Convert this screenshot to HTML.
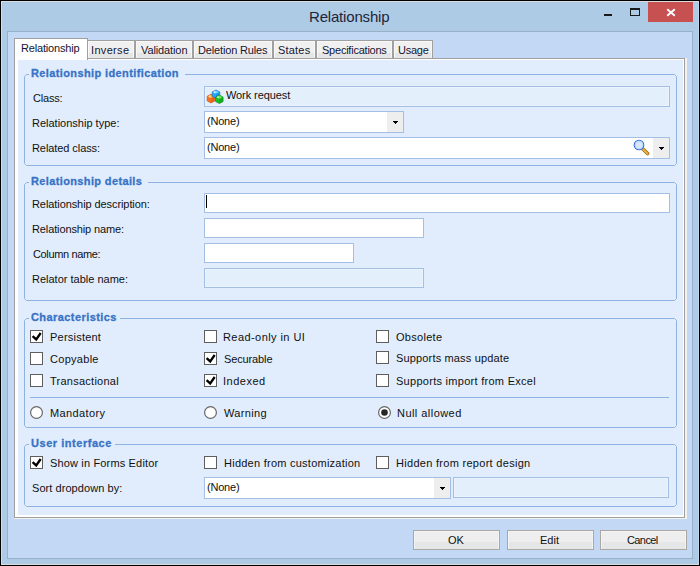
<!DOCTYPE html>
<html><head><meta charset="utf-8"><style>
html,body{margin:0;padding:0;width:700px;height:566px;overflow:hidden;background:#aecbe6}
div,svg{position:absolute}
.t{white-space:nowrap}
</style></head><body>
<div style="left:0px;top:0px;width:700px;height:566px;background:#000"></div>
<div style="left:1px;top:1px;width:698px;height:564px;background:#dcdcdc"></div>
<div style="left:2px;top:2px;width:697px;height:562px;background:#aecbe6"></div>
<div style="left:698px;top:2px;width:1px;height:562px;background:#bcd6ef"></div>
<div class="t" style="left:309px;top:10px;font:normal 15px/13px 'Liberation Sans',sans-serif;color:#1e2536;letter-spacing:-0.182px;">Relationship</div>
<div style="left:604px;top:14px;width:8px;height:2px;background:#1a1a1a"></div>
<div style="left:630px;top:8px;width:10px;height:8px;box-sizing:border-box;border:1px solid #1a1a1a;border-top-width:2px"></div>
<div style="left:648px;top:2px;width:45px;height:20px;background:#c75050"></div>
<svg style="position:absolute;left:648px;top:2px" width="45" height="20"><path d="M19.2 7.2 L26.8 13.8 M26.8 7.2 L19.2 13.8" stroke="#fff" stroke-width="1.9" stroke-linecap="butt"/></svg>
<div style="left:7px;top:31px;width:686px;height:528px;background:#98b0c8"></div>
<div style="left:8px;top:32px;width:684px;height:526px;background:#c3d8f5"></div>
<div style="left:14px;top:58px;width:671px;height:460px;background:#a0a0a0"></div>
<div style="left:685px;top:58px;width:2px;height:461px;background:#f4f2f0"></div>
<div style="left:14px;top:518px;width:673px;height:1px;background:#f4f2f0"></div>
<div style="left:15px;top:59px;width:669px;height:458px;background:#fff"></div>
<div style="left:18px;top:60px;width:665px;height:455px;background:#e1edfc"></div>
<div style="left:87px;top:40px;width:48px;height:19px;background:#a0a0a0"></div>
<div style="left:88px;top:41px;width:46px;height:17px;background:#f8f8f8"></div>
<div style="left:89px;top:42px;width:44px;height:11px;background:#f0f0f0"></div>
<div style="left:89px;top:53px;width:44px;height:4px;background:#e5e5e5"></div>
<div style="left:88px;top:57px;width:46px;height:1px;background:#e9e9e9"></div>
<div style="left:135px;top:40px;width:58px;height:19px;background:#a0a0a0"></div>
<div style="left:136px;top:41px;width:56px;height:17px;background:#f8f8f8"></div>
<div style="left:137px;top:42px;width:54px;height:11px;background:#f0f0f0"></div>
<div style="left:137px;top:53px;width:54px;height:4px;background:#e5e5e5"></div>
<div style="left:136px;top:57px;width:56px;height:1px;background:#e9e9e9"></div>
<div style="left:193px;top:40px;width:80px;height:19px;background:#a0a0a0"></div>
<div style="left:194px;top:41px;width:78px;height:17px;background:#f8f8f8"></div>
<div style="left:195px;top:42px;width:76px;height:11px;background:#f0f0f0"></div>
<div style="left:195px;top:53px;width:76px;height:4px;background:#e5e5e5"></div>
<div style="left:194px;top:57px;width:78px;height:1px;background:#e9e9e9"></div>
<div style="left:273px;top:40px;width:43px;height:19px;background:#a0a0a0"></div>
<div style="left:274px;top:41px;width:41px;height:17px;background:#f8f8f8"></div>
<div style="left:275px;top:42px;width:39px;height:11px;background:#f0f0f0"></div>
<div style="left:275px;top:53px;width:39px;height:4px;background:#e5e5e5"></div>
<div style="left:274px;top:57px;width:41px;height:1px;background:#e9e9e9"></div>
<div style="left:316px;top:40px;width:77px;height:19px;background:#a0a0a0"></div>
<div style="left:317px;top:41px;width:75px;height:17px;background:#f8f8f8"></div>
<div style="left:318px;top:42px;width:73px;height:11px;background:#f0f0f0"></div>
<div style="left:318px;top:53px;width:73px;height:4px;background:#e5e5e5"></div>
<div style="left:317px;top:57px;width:75px;height:1px;background:#e9e9e9"></div>
<div style="left:393px;top:40px;width:40px;height:19px;background:#a0a0a0"></div>
<div style="left:394px;top:41px;width:38px;height:17px;background:#f8f8f8"></div>
<div style="left:395px;top:42px;width:36px;height:11px;background:#f0f0f0"></div>
<div style="left:395px;top:53px;width:36px;height:4px;background:#e5e5e5"></div>
<div style="left:394px;top:57px;width:38px;height:1px;background:#e9e9e9"></div>
<div style="left:14px;top:38px;width:74px;height:22px;background:#a0a0a0"></div>
<div style="left:15px;top:39px;width:72px;height:21px;background:#fff"></div>
<div class="t" style="left:21px;top:42px;font:normal 11px/13px 'Liberation Sans',sans-serif;color:#141430;letter-spacing:-0.182px;">Relationship</div>
<div class="t" style="left:91px;top:44px;font:normal 11px/13px 'Liberation Sans',sans-serif;color:#141430;letter-spacing:0.333px;">Inverse</div>
<div class="t" style="left:141px;top:44px;font:normal 11px/13px 'Liberation Sans',sans-serif;color:#141430;letter-spacing:-0.111px;">Validation</div>
<div class="t" style="left:198px;top:44px;font:normal 11px/13px 'Liberation Sans',sans-serif;color:#141430;letter-spacing:-0.154px;">Deletion Rules</div>
<div class="t" style="left:278px;top:44px;font:normal 11px/13px 'Liberation Sans',sans-serif;color:#141430;letter-spacing:0.200px;">States</div>
<div class="t" style="left:322px;top:44px;font:normal 11px/13px 'Liberation Sans',sans-serif;color:#141430;letter-spacing:-0.231px;">Specifications</div>
<div class="t" style="left:398px;top:44px;font:normal 11px/13px 'Liberation Sans',sans-serif;color:#141430;letter-spacing:-0.250px;">Usage</div>
<svg style="position:absolute;left:24px;top:74px" width="653" height="92"><path d="M0.5 89 V2.5 L2.5 0.5 H5" fill="none" stroke="#8fb3e0" stroke-width="1"/><path d="M161 0.5 H650.5 L652.5 2.5 V89.5 L650.5 91.5 H2.5 L0.5 89.5 V89" fill="none" stroke="#8fb3e0" stroke-width="1"/></svg>
<div class="t" style="left:31px;top:67px;font:bold 11px/13px 'Liberation Sans',sans-serif;color:#3773c6;letter-spacing:0.385px;-webkit-text-stroke:0.3px #3773c6;">Relationship identification</div>
<svg style="position:absolute;left:24px;top:182px" width="653" height="119"><path d="M0.5 116 V2.5 L2.5 0.5 H5" fill="none" stroke="#8fb3e0" stroke-width="1"/><path d="M124 0.5 H650.5 L652.5 2.5 V116.5 L650.5 118.5 H2.5 L0.5 116.5 V116" fill="none" stroke="#8fb3e0" stroke-width="1"/></svg>
<div class="t" style="left:31px;top:175px;font:bold 11px/13px 'Liberation Sans',sans-serif;color:#3773c6;letter-spacing:0.368px;-webkit-text-stroke:0.3px #3773c6;">Relationship details</div>
<svg style="position:absolute;left:24px;top:318px" width="653" height="110"><path d="M0.5 107 V2.5 L2.5 0.5 H5" fill="none" stroke="#8fb3e0" stroke-width="1"/><path d="M96 0.5 H650.5 L652.5 2.5 V107.5 L650.5 109.5 H2.5 L0.5 107.5 V107" fill="none" stroke="#8fb3e0" stroke-width="1"/></svg>
<div class="t" style="left:31px;top:311px;font:bold 11px/13px 'Liberation Sans',sans-serif;color:#3773c6;letter-spacing:0.429px;-webkit-text-stroke:0.3px #3773c6;">Characteristics</div>
<svg style="position:absolute;left:24px;top:444px" width="653" height="63"><path d="M0.5 60 V2.5 L2.5 0.5 H5" fill="none" stroke="#8fb3e0" stroke-width="1"/><path d="M91 0.5 H650.5 L652.5 2.5 V60.5 L650.5 62.5 H2.5 L0.5 60.5 V60" fill="none" stroke="#8fb3e0" stroke-width="1"/></svg>
<div class="t" style="left:31px;top:437px;font:bold 11px/13px 'Liberation Sans',sans-serif;color:#3773c6;letter-spacing:0.538px;-webkit-text-stroke:0.3px #3773c6;">User interface</div>
<div class="t" style="left:33px;top:92px;font:normal 11px/13px 'Liberation Sans',sans-serif;color:#101010;letter-spacing:-0.200px;">Class:</div>
<div class="t" style="left:32px;top:117px;font:normal 11px/13px 'Liberation Sans',sans-serif;color:#101010;letter-spacing:0.000px;">Relationship type:</div>
<div class="t" style="left:32px;top:142px;font:normal 11px/13px 'Liberation Sans',sans-serif;color:#101010;letter-spacing:-0.077px;">Related class:</div>
<div style="left:204px;top:86px;width:466px;height:21px;background:#a3bfe3"></div>
<div style="left:205px;top:87px;width:464px;height:19px;background:#ecf3fd"></div>
<div style="left:206px;top:88px;width:462px;height:17px;background:#e4effc"></div>
<svg style="position:absolute;left:200px;top:84px" width="30" height="24" viewBox="200 84 30 24"><path d="M211 94.2 L214.8 96.27058823529413 L214.8 100.92941176470589 L211 103.0 L207.2 100.92941176470589 L207.2 96.27058823529413 Z" fill="#f8701c" stroke="#c04a10" stroke-width="0.6" stroke-linejoin="round"/><path d="M211 94.8 L214.20000000000002 96.47058823529413 L211 98.34117647058824 L207.79999999999998 96.47058823529413 Z" fill="#ffa850"/><path d="M211 98.34117647058824 L214.4 96.57058823529412 L214.4 100.72941176470589 L211 102.5 Z" fill="#c04a10" opacity="0.3"/><circle cx="209.7" cy="96.47058823529413" r="0.9" fill="#fff0a0"/><path d="M216 90 L219.8 91.92941176470588 L219.8 96.27058823529411 L216 98.2 L212.2 96.27058823529411 L212.2 91.92941176470588 Z" fill="#22aaf6" stroke="#1060c8" stroke-width="0.6" stroke-linejoin="round"/><path d="M216 90.6 L219.20000000000002 92.12941176470588 L216 93.85882352941177 L212.79999999999998 92.12941176470588 Z" fill="#6cd4ff"/><path d="M216 93.85882352941177 L219.4 92.22941176470587 L219.4 96.07058823529411 L216 97.7 Z" fill="#1060c8" opacity="0.3"/><circle cx="214.7" cy="92.12941176470588" r="0.9" fill="#e0f8ff"/><path d="M219.3 95 L223.10000000000002 97.02352941176471 L223.10000000000002 101.5764705882353 L219.3 103.6 L215.5 101.5764705882353 L215.5 97.02352941176471 Z" fill="#18c020" stroke="#0c7a14" stroke-width="0.6" stroke-linejoin="round"/><path d="M219.3 95.6 L222.50000000000003 97.22352941176472 L219.3 99.04705882352941 L216.1 97.22352941176472 Z" fill="#66e466"/><path d="M219.3 99.04705882352941 L222.70000000000002 97.32352941176471 L222.70000000000002 101.37647058823529 L219.3 103.1 Z" fill="#0c7a14" opacity="0.3"/><circle cx="218.0" cy="97.22352941176472" r="0.9" fill="#d0ffc8"/></svg>
<div class="t" style="left:226px;top:89px;font:normal 11px/13px 'Liberation Sans',sans-serif;color:#101010;letter-spacing:-0.091px;">Work request</div>
<div style="left:204px;top:111px;width:200px;height:22px;background:#a3bfe3"></div>
<div style="left:205px;top:112px;width:198px;height:20px;background:#fff"></div>
<div style="left:387px;top:112px;width:16px;height:20px;background:#eeeeee"></div>
<div style="left:393px;top:121px;width:5px;height:1px;background:#000"></div><div style="left:394px;top:122px;width:3px;height:1px;background:#000"></div><div style="left:395px;top:123px;width:1px;height:1px;background:#000"></div>
<div class="t" style="left:207px;top:115px;font:normal 11px/13px 'Liberation Sans',sans-serif;color:#101010;letter-spacing:-0.200px;">(None)</div>
<div style="left:204px;top:137px;width:466px;height:22px;background:#a3bfe3"></div>
<div style="left:205px;top:138px;width:464px;height:20px;background:#fff"></div>
<div style="left:653px;top:138px;width:16px;height:20px;background:#eeeeee"></div>
<div style="left:659px;top:147px;width:5px;height:1px;background:#000"></div><div style="left:660px;top:148px;width:3px;height:1px;background:#000"></div><div style="left:661px;top:149px;width:1px;height:1px;background:#000"></div>
<div class="t" style="left:207px;top:141px;font:normal 11px/13px 'Liberation Sans',sans-serif;color:#101010;letter-spacing:-0.200px;">(None)</div>
<svg style="position:absolute;left:632px;top:138px" width="18" height="19" viewBox="0 0 18 19">
<path d="M11.2 11.2 L15.6 15.6" stroke="#a06c18" stroke-width="3.6" stroke-linecap="round"/>
<path d="M11.2 11.2 L15.6 15.6" stroke="#e8b445" stroke-width="2" stroke-linecap="round"/>
<circle cx="7" cy="7" r="4.8" fill="#dde6f8" stroke="#3c66dd" stroke-width="1.1"/>
<circle cx="7" cy="7" r="3.8" fill="none" stroke="#a8e2ff" stroke-width="1"/></svg>
<div class="t" style="left:32px;top:198px;font:normal 11px/13px 'Liberation Sans',sans-serif;color:#101010;letter-spacing:-0.083px;">Relationship description:</div>
<div class="t" style="left:32px;top:223px;font:normal 11px/13px 'Liberation Sans',sans-serif;color:#101010;letter-spacing:-0.118px;">Relationship name:</div>
<div class="t" style="left:33px;top:248px;font:normal 11px/13px 'Liberation Sans',sans-serif;color:#101010;letter-spacing:-0.364px;">Column name:</div>
<div class="t" style="left:32px;top:273px;font:normal 11px/13px 'Liberation Sans',sans-serif;color:#101010;letter-spacing:0.000px;">Relator table name:</div>
<div style="left:204px;top:193px;width:466px;height:20px;background:#a3bfe3"></div>
<div style="left:205px;top:194px;width:464px;height:18px;background:#fff"></div>
<div style="left:206px;top:195px;width:1px;height:13px;background:#000"></div>
<div style="left:204px;top:218px;width:220px;height:20px;background:#a3bfe3"></div>
<div style="left:205px;top:219px;width:218px;height:18px;background:#fff"></div>
<div style="left:204px;top:243px;width:150px;height:20px;background:#a3bfe3"></div>
<div style="left:205px;top:244px;width:148px;height:18px;background:#fff"></div>
<div style="left:204px;top:268px;width:220px;height:20px;background:#a3bfe3"></div>
<div style="left:205px;top:269px;width:218px;height:18px;background:#ecf3fd"></div>
<div style="left:206px;top:270px;width:216px;height:16px;background:#e4effc"></div>
<div style="left:30px;top:330px;width:13px;height:13px;background:#5e5e5e"></div>
<div style="left:31px;top:331px;width:11px;height:11px;background:#fff"></div>
<svg style="position:absolute;left:30px;top:330px" width="13" height="13"><path d="M2.6 6.1 L6.2 9.4 L10.7 3" fill="none" stroke="#000" stroke-width="2.3"/></svg>
<div class="t" style="left:50px;top:331px;font:normal 11px/13px 'Liberation Sans',sans-serif;color:#101010;letter-spacing:0.222px;">Persistent</div>
<div style="left:30px;top:352px;width:13px;height:13px;background:#5e5e5e"></div>
<div style="left:31px;top:353px;width:11px;height:11px;background:#fff"></div>
<div class="t" style="left:50px;top:353px;font:normal 11px/13px 'Liberation Sans',sans-serif;color:#101010;letter-spacing:0.286px;">Copyable</div>
<div style="left:30px;top:374px;width:13px;height:13px;background:#5e5e5e"></div>
<div style="left:31px;top:375px;width:11px;height:11px;background:#fff"></div>
<div class="t" style="left:50px;top:375px;font:normal 11px/13px 'Liberation Sans',sans-serif;color:#101010;letter-spacing:0.250px;">Transactional</div>
<div style="left:204px;top:330px;width:13px;height:13px;background:#5e5e5e"></div>
<div style="left:205px;top:331px;width:11px;height:11px;background:#fff"></div>
<div class="t" style="left:223px;top:331px;font:normal 11px/13px 'Liberation Sans',sans-serif;color:#101010;letter-spacing:0.429px;">Read-only in UI</div>
<div style="left:204px;top:352px;width:13px;height:13px;background:#5e5e5e"></div>
<div style="left:205px;top:353px;width:11px;height:11px;background:#fff"></div>
<svg style="position:absolute;left:204px;top:352px" width="13" height="13"><path d="M2.6 6.1 L6.2 9.4 L10.7 3" fill="none" stroke="#000" stroke-width="2.3"/></svg>
<div class="t" style="left:224px;top:353px;font:normal 11px/13px 'Liberation Sans',sans-serif;color:#101010;letter-spacing:-0.125px;">Securable</div>
<div style="left:204px;top:374px;width:13px;height:13px;background:#5e5e5e"></div>
<div style="left:205px;top:375px;width:11px;height:11px;background:#fff"></div>
<svg style="position:absolute;left:204px;top:374px" width="13" height="13"><path d="M2.6 6.1 L6.2 9.4 L10.7 3" fill="none" stroke="#000" stroke-width="2.3"/></svg>
<div class="t" style="left:223px;top:375px;font:normal 11px/13px 'Liberation Sans',sans-serif;color:#101010;letter-spacing:0.500px;">Indexed</div>
<div style="left:376px;top:330px;width:13px;height:13px;background:#5e5e5e"></div>
<div style="left:377px;top:331px;width:11px;height:11px;background:#fff"></div>
<div class="t" style="left:396px;top:331px;font:normal 11px/13px 'Liberation Sans',sans-serif;color:#101010;letter-spacing:0.286px;">Obsolete</div>
<div style="left:376px;top:351px;width:13px;height:13px;background:#5e5e5e"></div>
<div style="left:377px;top:352px;width:11px;height:11px;background:#fff"></div>
<div class="t" style="left:396px;top:352px;font:normal 11px/13px 'Liberation Sans',sans-serif;color:#101010;letter-spacing:0.158px;">Supports mass update</div>
<div style="left:376px;top:374px;width:13px;height:13px;background:#5e5e5e"></div>
<div style="left:377px;top:375px;width:11px;height:11px;background:#fff"></div>
<div class="t" style="left:396px;top:375px;font:normal 11px/13px 'Liberation Sans',sans-serif;color:#101010;letter-spacing:0.280px;">Supports import from Excel</div>
<div style="left:30px;top:397px;width:639px;height:1px;background:#8fb3e0"></div>
<svg style="position:absolute;left:30px;top:406px" width="13" height="13"><circle cx="6.5" cy="6.5" r="5.9" fill="#fff" stroke="#666" stroke-width="1.2"/></svg>
<div class="t" style="left:50px;top:407px;font:normal 11px/13px 'Liberation Sans',sans-serif;color:#101010;letter-spacing:0.375px;">Mandatory</div>
<svg style="position:absolute;left:204px;top:406px" width="13" height="13"><circle cx="6.5" cy="6.5" r="5.9" fill="#fff" stroke="#666" stroke-width="1.2"/></svg>
<div class="t" style="left:224px;top:407px;font:normal 11px/13px 'Liberation Sans',sans-serif;color:#101010;letter-spacing:0.333px;">Warning</div>
<svg style="position:absolute;left:378px;top:406px" width="13" height="13"><circle cx="6.5" cy="6.5" r="5.9" fill="#fff" stroke="#666" stroke-width="1.2"/><circle cx="6.5" cy="6.5" r="3.3" fill="#262626"/></svg>
<div class="t" style="left:397px;top:407px;font:normal 11px/13px 'Liberation Sans',sans-serif;color:#101010;letter-spacing:0.455px;">Null allowed</div>
<div style="left:30px;top:456px;width:13px;height:13px;background:#5e5e5e"></div>
<div style="left:31px;top:457px;width:11px;height:11px;background:#fff"></div>
<svg style="position:absolute;left:30px;top:456px" width="13" height="13"><path d="M2.6 6.1 L6.2 9.4 L10.7 3" fill="none" stroke="#000" stroke-width="2.3"/></svg>
<div class="t" style="left:50px;top:457px;font:normal 11px/13px 'Liberation Sans',sans-serif;color:#101010;letter-spacing:0.158px;">Show in Forms Editor</div>
<div style="left:204px;top:456px;width:13px;height:13px;background:#5e5e5e"></div>
<div style="left:205px;top:457px;width:11px;height:11px;background:#fff"></div>
<div class="t" style="left:224px;top:457px;font:normal 11px/13px 'Liberation Sans',sans-serif;color:#101010;letter-spacing:0.250px;">Hidden from customization</div>
<div style="left:376px;top:456px;width:13px;height:13px;background:#5e5e5e"></div>
<div style="left:377px;top:457px;width:11px;height:11px;background:#fff"></div>
<div class="t" style="left:396px;top:457px;font:normal 11px/13px 'Liberation Sans',sans-serif;color:#101010;letter-spacing:0.292px;">Hidden from report design</div>
<div class="t" style="left:32px;top:482px;font:normal 11px/13px 'Liberation Sans',sans-serif;color:#101010;letter-spacing:0.062px;">Sort dropdown by:</div>
<div style="left:204px;top:477px;width:247px;height:22px;background:#a3bfe3"></div>
<div style="left:205px;top:478px;width:245px;height:20px;background:#fff"></div>
<div style="left:434px;top:478px;width:16px;height:20px;background:#eeeeee"></div>
<div style="left:440px;top:487px;width:5px;height:1px;background:#000"></div><div style="left:441px;top:488px;width:3px;height:1px;background:#000"></div><div style="left:442px;top:489px;width:1px;height:1px;background:#000"></div>
<div class="t" style="left:207px;top:481px;font:normal 11px/13px 'Liberation Sans',sans-serif;color:#101010;letter-spacing:-0.200px;">(None)</div>
<div style="left:453px;top:477px;width:216px;height:21px;background:#a3bfe3"></div>
<div style="left:454px;top:478px;width:214px;height:19px;background:#ecf3fd"></div>
<div style="left:455px;top:479px;width:212px;height:17px;background:#e4effc"></div>
<div style="left:413px;top:530px;width:87px;height:20px;background:#aba8a4"></div>
<div style="left:414px;top:531px;width:85px;height:18px;background:#f3f3f3"></div>
<div style="left:415px;top:532px;width:83px;height:10px;background:#eeeeee"></div>
<div style="left:415px;top:542px;width:83px;height:7px;background:#e4e6e7"></div>
<div class="t" style="left:448px;top:534px;font:normal 11px/13px 'Liberation Sans',sans-serif;color:#101010;">OK</div>
<div style="left:507px;top:530px;width:87px;height:20px;background:#aba8a4"></div>
<div style="left:508px;top:531px;width:85px;height:18px;background:#f3f3f3"></div>
<div style="left:509px;top:532px;width:83px;height:10px;background:#eeeeee"></div>
<div style="left:509px;top:542px;width:83px;height:7px;background:#e4e6e7"></div>
<div class="t" style="left:540px;top:534px;font:normal 11px/13px 'Liberation Sans',sans-serif;color:#101010;letter-spacing:0.000px;">Edit</div>
<div style="left:600px;top:530px;width:87px;height:20px;background:#aba8a4"></div>
<div style="left:601px;top:531px;width:85px;height:18px;background:#f3f3f3"></div>
<div style="left:602px;top:532px;width:83px;height:10px;background:#eeeeee"></div>
<div style="left:602px;top:542px;width:83px;height:7px;background:#e4e6e7"></div>
<div class="t" style="left:627px;top:534px;font:normal 11px/13px 'Liberation Sans',sans-serif;color:#101010;letter-spacing:-0.600px;">Cancel</div>
</body></html>
